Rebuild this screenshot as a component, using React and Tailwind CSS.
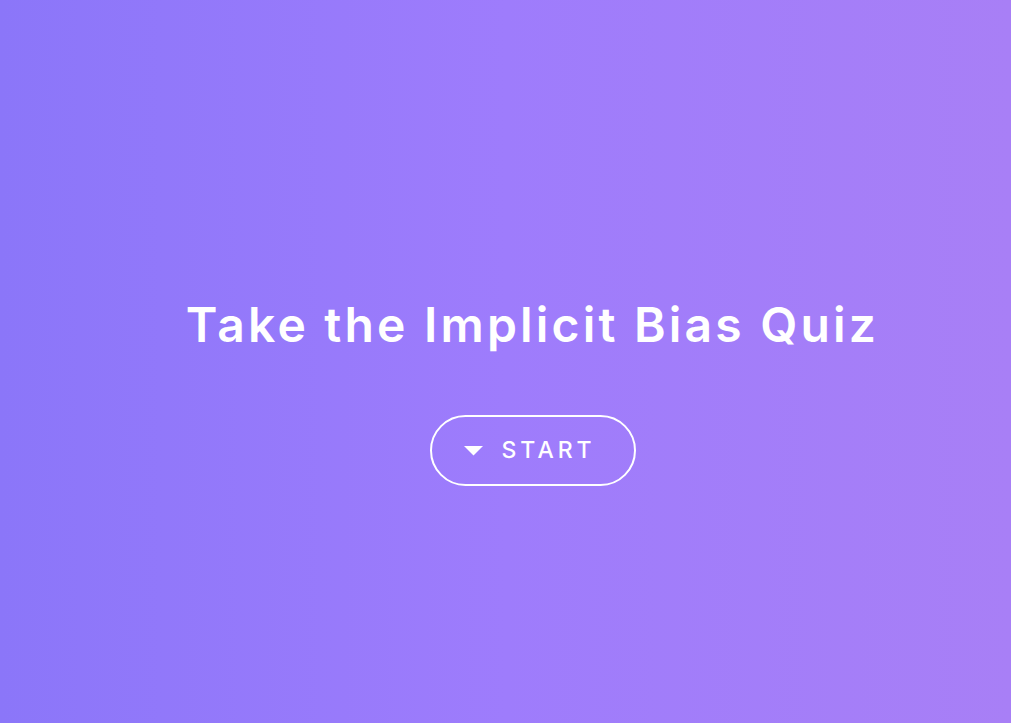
import React from 'react'

const App = () => {
  return (
    <div
      className="w-full h-[723px] overflow-hidden bg-gradient-to-r from-[#8b76f9] via-[#9e7cfc] to-[#a87ff6] flex flex-col items-center pt-[296px] pl-[54px]"
      style={{ fontFamily: 'Inter, "Open Sans", sans-serif' }}
    >
      {/* Title */}
      <h1 className="text-[48px] leading-[57px] font-semibold text-white tracking-[3.2px]">
        Take the Implicit Bias Quiz
      </h1>

      {/* Start button */}
      <button className="mt-[62px] h-[71px] w-[206px] rounded-full border-2 border-white flex items-center pl-[32px] text-white">
        <svg width="19" height="10" viewBox="0 0 19 10" className="mr-[19px]">
          <polygon points="0,0 19,0 9.5,9.5" fill="white" />
        </svg>
        <span className="text-[23px] font-medium tracking-[4px]">START</span>
      </button>
    </div>
  )
}

export default App
